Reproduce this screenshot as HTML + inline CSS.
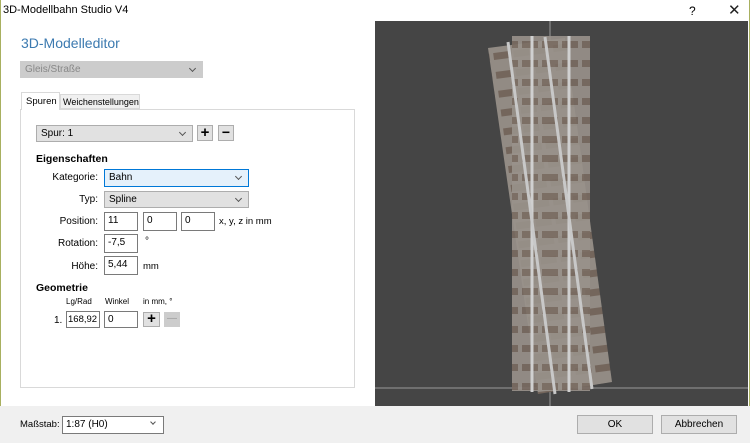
<!DOCTYPE html>
<html><head><meta charset="utf-8"><style>
*{box-sizing:border-box;margin:0;padding:0}
body{width:750px;height:443px;overflow:hidden;background:#fff;font-family:"Liberation Sans",sans-serif;font-size:10px;color:#000;position:relative}
.a{position:absolute;white-space:nowrap}
.box{position:absolute;border:1px solid #7a7a7a;background:#fff;padding:2px 3px;font-size:10px;line-height:12px;white-space:nowrap;overflow:hidden}
.dd{position:absolute;border:1px solid #adadad;background:#e1e1e1;padding:2px 4px;font-size:10px;line-height:12px}
.dd:after{content:"";position:absolute;right:7px;top:4px;width:4px;height:4px;border-right:1px solid #555;border-bottom:1px solid #555;transform:rotate(45deg)}
.btn{position:absolute;border:1px solid #adadad;background:#e1e1e1;text-align:center}
.lbl{position:absolute;font-size:10px;text-align:right}
</style></head><body>
<div class="a" style="left:0;top:0;width:750px;height:443px;border:1px solid #a8b060;border-top:none"></div>
<div class="a" style="left:3px;top:4px;font-size:11px">3D-Modellbahn Studio V4</div>
<div class="a" style="left:689px;top:4px;font-size:12px">?</div>
<div class="a" style="left:728px;top:1px;font-size:15px;color:#222">✕</div>
<div class="a" style="left:21px;top:35px;font-size:14px;color:#3c7ab0">3D-Modelleditor</div>
<div class="dd" style="left:20px;top:61px;width:183px;height:17px;background:#ccc;border-color:#ccc;color:#888">Gleis/Straße</div>
<div class="a" style="left:20px;top:109px;width:335px;height:279px;border:1px solid #d9d9d9"></div>
<div class="a" style="left:21px;top:92px;width:39px;height:18px;background:#fff;border:1px solid #d9d9d9;border-bottom:none;font-size:9.5px;padding:3px 0 0 4px">Spuren</div>
<div class="a" style="left:60px;top:94px;width:80px;height:15px;background:#f0f0f0;border:1px solid #d9d9d9;font-size:9px;padding:2px 0 0 2px;overflow:hidden">Weichenstellungen</div>
<div class="dd" style="left:36px;top:125px;width:157px;height:17px">Spur: 1</div>
<div class="btn" style="left:197px;top:125px;width:16px;height:16px;font-size:15px;line-height:13px;font-weight:bold">+</div>
<div class="btn" style="left:218px;top:125px;width:16px;height:16px;font-size:14px;line-height:12px;font-weight:bold">−</div>
<div class="a" style="left:36px;top:153px;font-weight:bold;font-size:10.5px">Eigenschaften</div>
<div class="lbl" style="left:30px;top:172px;width:68px">Kategorie:</div>
<div class="dd" style="left:104px;top:169px;width:145px;height:18px;background:#e5f1fb;border-color:#0078d7">Bahn</div>
<div class="lbl" style="left:30px;top:194px;width:68px">Typ:</div>
<div class="dd" style="left:104px;top:191px;width:145px;height:17px">Spline</div>
<div class="lbl" style="left:30px;top:216px;width:68px">Position:</div>
<div class="box" style="left:104px;top:212px;width:34px;height:19px">11</div>
<div class="box" style="left:143px;top:212px;width:34px;height:19px">0</div>
<div class="box" style="left:181px;top:212px;width:34px;height:19px">0</div>
<div class="a" style="left:219px;top:216px;font-size:9.5px">x, y, z in mm</div>
<div class="lbl" style="left:30px;top:238px;width:68px">Rotation:</div>
<div class="box" style="left:104px;top:234px;width:34px;height:19px">-7,5</div>
<div class="a" style="left:145px;top:236px;font-size:10px">°</div>
<div class="lbl" style="left:30px;top:261px;width:68px">Höhe:</div>
<div class="box" style="left:104px;top:256px;width:34px;height:19px">5,44</div>
<div class="a" style="left:143px;top:261px;font-size:9.5px">mm</div>
<div class="a" style="left:36px;top:282px;font-weight:bold;font-size:10.5px">Geometrie</div>
<div class="a" style="left:66px;top:297px;font-size:8px">Lg/Rad</div>
<div class="a" style="left:105px;top:297px;font-size:8px">Winkel</div>
<div class="a" style="left:143px;top:297px;font-size:8px">in mm, °</div>
<div class="a" style="left:54px;top:315px;font-size:10px">1.</div>
<div class="box" style="left:66px;top:311px;width:34px;height:17px;padding:2px 1px;font-size:9.5px">168,92</div>
<div class="box" style="left:104px;top:311px;width:34px;height:17px">0</div>
<div class="btn" style="left:143px;top:312px;width:17px;height:15px;font-size:15px;line-height:12px;font-weight:bold">+</div>
<div class="btn" style="left:164px;top:312px;width:16px;height:15px;background:#ccc;border-color:#ccc;color:#999;line-height:12px">—</div>
<div class="a" style="left:0;top:406px;width:750px;height:37px;background:#f0f0f0"></div>
<div class="a" style="left:20px;top:419px;font-size:9.5px">Maßstab:</div>
<div class="box" style="left:62px;top:416px;width:102px;height:18px;border-color:#7a7a7a">1:87 (H0)</div>
<div class="a" style="left:151px;top:420px;width:4px;height:4px;border-right:1px solid #555;border-bottom:1px solid #555;transform:rotate(45deg)"></div>
<div class="btn" style="left:577px;top:415px;width:76px;height:19px;font-size:10px;line-height:17px">OK</div>
<div class="btn" style="left:661px;top:415px;width:76px;height:19px;font-size:10px;line-height:17px">Abbrechen</div>
<svg class="a" style="left:375px;top:21px" width="373" height="385" viewBox="375 21 373 385">
<defs>
<pattern id="sl" width="20" height="19" patternUnits="userSpaceOnUse">
<rect width="20" height="19" fill="#99928b"/>
<rect x="2" y="3" width="16" height="7" fill="#7a6c62"/>
</pattern>
<pattern id="sl2" width="20" height="19" patternUnits="userSpaceOnUse" patternTransform="rotate(-7.5)">
<rect width="20" height="19" fill="#928b84"/>
<rect x="2" y="3" width="16" height="7" fill="#74665c"/>
</pattern>
</defs>
<rect x="375" y="21" width="373" height="385" fill="#454545"/>
<line x1="550" y1="21" x2="550" y2="406" stroke="#999" stroke-width="1"/>
<line x1="375" y1="388" x2="748" y2="388" stroke="#999" stroke-width="1"/>
<polygon points="488,48 565,38 612,382 538,394" fill="url(#sl2)"/>
<rect x="512" y="36" width="78" height="355" fill="url(#sl)" opacity="0.9"/>
<line x1="532" y1="36" x2="532" y2="392" stroke="#d0d0d0" stroke-width="3"/>
<line x1="569" y1="36" x2="569" y2="392" stroke="#d0d0d0" stroke-width="3"/>
<line x1="508" y1="42" x2="555" y2="394" stroke="#c8c8c8" stroke-width="3"/>
<line x1="545" y1="37" x2="592" y2="389" stroke="#c8c8c8" stroke-width="3"/>
</svg>
</body></html>
